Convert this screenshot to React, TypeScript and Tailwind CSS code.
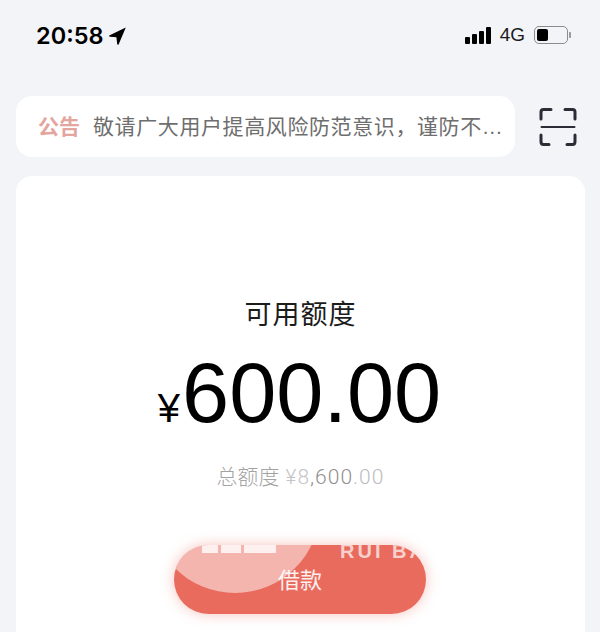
import React from "react";

const cjk = "font-['Liberation_Sans','Noto_Sans_CJK_SC',sans-serif]";

function StatusBar() {
    return (
        <div className="flex h-[96px] items-start justify-between pl-[36px] pr-[29px] pt-[21px]">
            <div className="flex items-center gap-[6px]">
                <span className="font-['Inter',sans-serif] text-[23.5px] leading-[30px] font-semibold text-black">20:58</span>
                <svg width="17" height="18" viewBox="0 0 17 18">
                    <path d="M16.8 0.4 L0.2 8.4 Q0 9.6 1 9.8 L7.4 10.2 L8.2 17 Q8.6 18 9.6 17.4 Z" fill="#000" />
                </svg>
            </div>
            <div className="flex items-center pt-[4px]">
                <div className="flex items-end gap-[2px]">
                    <div className="h-[7px] w-[5px] rounded-[1px] bg-black" />
                    <div className="h-[10px] w-[5px] rounded-[1px] bg-black" />
                    <div className="h-[13px] w-[5px] rounded-[1px] bg-black" />
                    <div className="h-[17px] w-[5px] rounded-[1px] bg-black" />
                </div>
                <span className="ml-[9px] font-['Liberation_Sans',sans-serif] text-[19px] leading-[20px] text-[#1a1a1a]">4G</span>
                <div className="ml-[9px] flex h-[18px] w-[34px] items-center rounded-[5px] border border-[#8c8c8c] p-[2px]">
                    <div className="h-full w-[11px] rounded-[2px] bg-black" />
                </div>
                <div className="ml-[1px] h-[6px] w-[2px] rounded-r-[1px] bg-[#9a9a9a]" />
            </div>
        </div>
    );
}

function Notice() {
    return (
        <div className="flex items-center pl-[16px] pr-[23px]">
            <div className={`flex h-[61px] w-[499px] items-center rounded-[16px] bg-white pl-[22px] ${cjk}`}>
                <span className="shrink-0 text-[21px] font-bold whitespace-nowrap text-[#e3a59e]">公告</span>
                <span className="ml-[13px] text-[21px] tracking-[0.6px] whitespace-nowrap text-[#6e6e6e]">敬请广大用户提高风险防范意识，谨防不…</span>
            </div>
            <svg className="ml-auto" width="38" height="38" viewBox="0 0 38 38" fill="none" stroke="#2b2d36" strokeWidth="3" strokeLinecap="round" strokeLinejoin="round">
                <path d="M2 11 V4 Q2 1.5 4.5 1.5 H12" />
                <path d="M26 1.5 H33.5 Q36 1.5 36 4 V11" />
                <path d="M2 27 V33.5 Q2 36.5 4.5 36.5 H10" />
                <path d="M28 36.5 H33.5 Q36 36.5 36 33.5 V27" />
                <path d="M2.5 19 H35.5" strokeWidth="2" />
            </svg>
        </div>
    );
}

function BorrowButton() {
    return (
        <div className="relative h-[69px] w-[252px] overflow-hidden rounded-full bg-[#e96b5e] shadow-[0_0_14px_rgba(233,107,94,0.4)]">
            {/* watermark bleeding over the button */}
            <div className="absolute top-[-122px] left-[-24px] h-[170px] w-[170px] rounded-full bg-white/50" />
            <div className="absolute top-0 left-[28px] flex gap-[3px]">
                <div className="h-[8px] w-[16px] bg-white/80" />
                <div className="h-[8px] w-[20px] bg-white/80" />
                <div className="h-[8px] w-[32px] bg-white/80" />
            </div>
            <span className="absolute top-[-7px] left-[166px] font-['Liberation_Sans',sans-serif] text-[20px] leading-[26px] font-bold tracking-[3px] whitespace-nowrap text-white/70">RUI BAO</span>
            <div className={`relative flex h-full items-center justify-center pt-[2px] text-[22px] text-white/90 ${cjk}`}>借款</div>
        </div>
    );
}

function CreditCard() {
    return (
        <div className="ml-[16px] mt-[19px] flex h-[456px] w-[569px] flex-col items-center overflow-hidden rounded-t-[16px] bg-white pt-[121px]">
            <div className={`text-[27px] leading-[36px] tracking-[1px] text-[#1c1c1c] ${cjk}`}>可用额度</div>
            <div className="mt-[18px] mr-[2px] flex items-baseline font-['Liberation_Sans',sans-serif] text-black">
                <span className="mr-[2px] text-[40px] leading-[84px]">¥</span>
                <span className="text-[84.7px] leading-[84px]">600.00</span>
            </div>
            <div className="mt-[13px] flex items-baseline text-[21px] leading-[28px] font-light">
                <span className={`text-[#a3a3a3] ${cjk}`}>总额度</span>
                <span className="ml-[6px] font-['Roboto',sans-serif] tracking-[1px]">
                    <span className="text-[#c4c4c8]">¥8</span>
                    <span className="text-[#8f8f8f]">,600</span>
                    <span className="text-[#bcbcc0]">.00</span>
                </span>
            </div>
            <div className="mt-[54px] mr-[1px]">
                <BorrowButton />
            </div>
        </div>
    );
}

export default function App() {
    return (
        <div className="h-[632px] w-[600px] overflow-hidden bg-[#f3f4f8]">
            <StatusBar />
            <Notice />
            <CreditCard />
        </div>
    );
}
